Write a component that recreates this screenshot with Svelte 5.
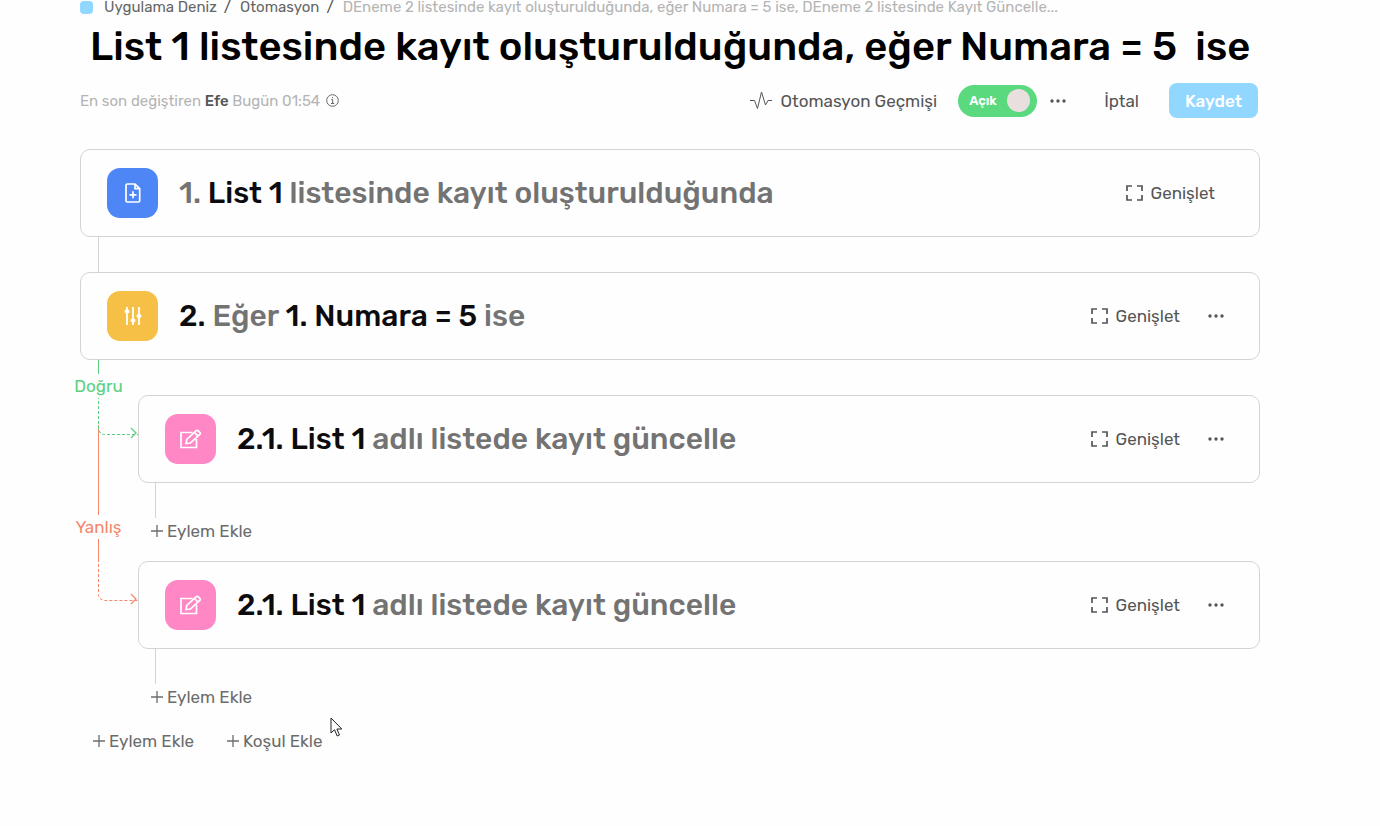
<script>
    let active = $state(true)

    const trigger = {
        icon: 'record',
        text: [['1. ', false], ['List 1', true], [' listesinde kayıt oluşturulduğunda', false]],
    }

    const condition = {
        icon: 'filter',
        text: [['2. ', true], ['Eğer', false], [' 1. Numara = 5', true], [' ise', false]],
        menu: true,
    }

    const update = {
        icon: 'edit',
        text: [['2.1. List 1', true], [' adlı listede kayıt güncelle', false]],
        menu: true,
    }
</script>

{#snippet dots()}
    <svg class="dots" width="16" height="4" viewBox="0 0 16 4" aria-hidden="true">
        <circle cx="2" cy="2" r="1.7" />
        <circle cx="8" cy="2" r="1.7" />
        <circle cx="14" cy="2" r="1.7" />
    </svg>
{/snippet}

{#snippet addButton(label)}
    <button class="add">
        <svg width="12" height="12" viewBox="0 0 12 12" aria-hidden="true">
            <path d="M6 0v12M0 6h12" />
        </svg>
        {label}
    </button>
{/snippet}

{#snippet arrow()}
    <svg class="arrow" width="7" height="12" viewBox="0 0 7 12" aria-hidden="true">
        <path d="M1 1l5 5-5 5" />
    </svg>
{/snippet}

{#snippet card(step)}
    <article class="card">
        <span class="icon {step.icon}">
            {#if step.icon === 'record'}
                <svg width="16" height="20" viewBox="0 0 16 20" aria-hidden="true">
                    <path d="M2.3 1h7.7l4.7 4.7v12a1.3 1.3 0 0 1-1.3 1.3H2.3A1.3 1.3 0 0 1 1 17.7V2.3A1.3 1.3 0 0 1 2.3 1z" />
                    <path d="M10 1v4.7h4.7M8 8.300v7M4.5 11.8h7" />
                </svg>
            {:else if step.icon === 'filter'}
                <svg width="18" height="20" viewBox="0 0 18 20" aria-hidden="true">
                    <path d="M3 1v18M9 1v18M15 1v18" stroke-width="1.8" />
                    <path d="M2.500 5.500h1M8.500 14.500h1M14.500 10h1" stroke-width="4" stroke-linecap="round" />
                </svg>
            {:else}
                <svg width="22" height="20" viewBox="0 0 22 20" aria-hidden="true">
                    <path d="M12.5 3.5H1V18.5h15.5V10" />
                    <path d="M6 14.5l.8-4L16 1.800a1.600 1.600 0 0 1 2.300 0l1.500 1.500a1.600 1.600 0 0 1 0 2.200L10.5 14z" />
                    <path d="M14.5 3.5l3.600 3.600" />
                </svg>
            {/if}
        </span>
        <h2>{#each step.text as [part, strong]}<span class:strong>{part}</span>{/each}</h2>
        <button class="expand">
            <svg width="17" height="16" viewBox="0 0 17 16" aria-hidden="true">
                <path d="M1 6V1h5M11 1h5v5M16 10v5h-5M6 15H1v-5" />
            </svg>
            Genişlet
        </button>
        {#if step.menu}
            <button class="menu" aria-label="Seçenekler">{@render dots()}</button>
        {/if}
    </article>
{/snippet}

<main>
    <nav>
        <span class="app-color"></span>
        <a href="#app">Uygulama Deniz</a>
        <i>/</i>
        <a href="#automations">Otomasyon</a>
        <i>/</i>
        <span class="current">DEneme 2 listesinde kayıt oluşturulduğunda, eğer Numara = 5 ise, DEneme 2 listesinde Kayıt Güncelle...</span>
    </nav>

    <h1>List 1 listesinde kayıt oluşturulduğunda, eğer Numara = 5&nbsp; ise</h1>

    <header>
        <p class="modified">
            <span>En son değiştiren <b>Efe</b> Bugün 01:54</span>
            <svg width="13" height="13" viewBox="0 0 13 13" aria-hidden="true">
                <circle cx="6.5" cy="6.5" r="5.8" />
                <path d="M5.3 5.5h1.4v4M5 9.5h3.2M6.4 3v1.2" />
            </svg>
        </p>
        <button class="history">
            <svg width="22" height="20" viewBox="0 0 22 20" aria-hidden="true">
                <path d="M0 9.5h4.5l3 8L11.5 1l4 13 2.5-4.5h4" />
            </svg>
            Otomasyon Geçmişi
        </button>
        <label class="switch" class:active>
            Açık
            <input type="checkbox" role="switch" bind:checked={active}>
        </label>
        <button class="menu" aria-label="Diğer">{@render dots()}</button>
        <button class="cancel">İptal</button>
        <button class="save">Kaydet</button>
    </header>

    {@render card(trigger)}
    <div class="connector"></div>
    {@render card(condition)}

    <section class="branch first">
        <div class="lane">
            <div class="line true stub"></div>
            <span class="label true">Doğru</span>
            <div class="elbow true">{@render arrow()}</div>
            <div class="line false long"></div>
            <span class="label false">Yanlış</span>
            <div class="line false rest"></div>
        </div>
        <div class="body">
            {@render card(update)}
            <div class="connector"></div>
            {@render addButton('Eylem Ekle')}
        </div>
    </section>

    <section class="branch">
        <div class="lane">
            <div class="elbow false">{@render arrow()}</div>
        </div>
        <div class="body">
            {@render card(update)}
            <div class="connector"></div>
            {@render addButton('Eylem Ekle')}
        </div>
    </section>

    <footer>
        {@render addButton('Eylem Ekle')}
        {@render addButton('Koşul Ekle')}
    </footer>

    <svg class="cursor" width="13" height="21" viewBox="0 0 13 21" aria-hidden="true">
        <path d="M1 1v15l3.5-3.3 2.7 6.3 2.3-1-2.6-6h4.9z" />
    </svg>
</main>

<style>
    :global(body) {
        margin: 0;
        background: #fefefe;
    }

    main {
        position: relative;
        padding: 0 120px 40px 80px;
        font-family: Rubik, Roboto, sans-serif;
        font-size: 17px;
        color: #555;
    }

    button {
        display: flex;
        align-items: center;
        padding: 0;
        border: 0;
        background: none;
        font: inherit;
        color: inherit;
        white-space: nowrap;
        cursor: pointer;
    }

    svg {
        flex: none;
        fill: none;
        stroke: currentColor;
    }

    /* Breadcrumb and title */

    nav {
        display: flex;
        align-items: center;
        height: 14px;
        font-size: 15px;
        line-height: 14px;
        white-space: nowrap;
    }

    nav a {
        color: #666;
        text-decoration: none;
    }

    nav i {
        margin: 0 9px 0 7px;
        font-style: normal;
    }

    .app-color {
        width: 13px;
        height: 13px;
        margin-right: 11px;
        border-radius: 4px;
        background: #91d7ff;
    }

    .current {
        color: #b4b4b4;
    }

    h1 {
        margin: 8px 0 12px 10px;
        font-size: 40px;
        font-weight: 500;
        line-height: 49px;
        color: #000;
        white-space: nowrap;
    }

    header {
        display: flex;
        align-items: center;
        margin: 0 2px 31px 0;
        height: 35px;
    }

    .modified {
        display: flex;
        align-items: center;
        gap: 6px;
        margin: 0 auto 0 0;
        font-size: 15px;
        color: #b4b4b4;
        white-space: nowrap;
    }

    .modified b {
        font-weight: 500;
        color: #555;
    }

    .modified svg {
        color: #666;
    }

    .history {
        gap: 9px;
    }

    .switch {
        display: flex;
        align-items: center;
        justify-content: space-between;
        box-sizing: border-box;
        width: 79px;
        height: 32px;
        margin-left: 21px;
        padding: 0 7px 0 11px;
        border-radius: 16px;
        background: #bbb;
        font-size: 13px;
        font-weight: 600;
        color: #fff;
    }

    .switch.active {
        background: #5bd97f;
    }

    .switch input {
        appearance: none;
        width: 23px;
        height: 23px;
        margin: 0;
        border-radius: 50%;
        background: #e9dfdf;
    }

    .dots {
        fill: currentColor;
        stroke: none;
    }

    header .menu {
        margin-left: 13px;
    }

    .cancel {
        margin: 0 30px 0 38px;
    }

    .save {
        height: 35px;
        padding: 0 16px;
        border-radius: 8px;
        background: #91d7ff;
        font-weight: 500;
        color: #fff;
    }

    /* Steps */

    .card {
        display: flex;
        align-items: center;
        padding: 18px 35px 18px 26px;
        border: 1px solid #d4d4d4;
        border-radius: 10px;
    }

    .icon {
        display: flex;
        flex: none;
        align-items: center;
        justify-content: center;
        width: 51px;
        height: 50px;
        border-radius: 13px;
        color: #fff;
    }

    .icon svg {
        stroke-width: 1.7;
    }

    .icon.record {
        background: #4e87f5;
    }

    .icon.filter {
        background: #f6bf45;
    }

    .icon.edit {
        background: #ff87c5;
    }

    h2 {
        flex: 1;
        margin: 0 0 0 21px;
        font-size: 30px;
        font-weight: 500;
        line-height: 40px;
        color: #737373;
        white-space: pre-wrap;
    }

    .strong {
        color: #0c0c0f;
    }

    .expand {
        gap: 8px;
        margin-right: 9px;
    }

    .expand svg {
        stroke-width: 1.7;
    }

    .card .menu {
        margin-left: 19px;
    }

    .connector {
        width: 1px;
        height: 35px;
        margin-left: 18px;
        background: #d4d4d4;
    }

    /* Branches */

    .branch {
        display: flex;
        padding-bottom: 18px;
    }

    .branch.first {
        padding-bottom: 0;
    }

    .lane {
        display: flex;
        flex-direction: column;
        flex: none;
        width: 58px;
    }

    .body {
        flex: 1;
    }

    .first .body {
        padding: 35px 0 17px;
    }

    .body .connector {
        margin-left: 17px;
    }

    .true {
        color: #5bd080;
    }

    .false {
        color: #f5876b;
    }

    .line {
        width: 1px;
        margin-left: 18px;
        background: currentColor;
    }

    .stub {
        height: 14px;
    }

    .long {
        height: 90px;
        margin-top: -10px;
    }

    .rest {
        flex: 1;
    }

    .label {
        display: flex;
        justify-content: center;
        width: 37px;
        line-height: 24px;
    }

    .elbow {
        position: relative;
        box-sizing: border-box;
        height: 37px;
        margin-left: 18px;
        border: 1px dashed currentColor;
        border-width: 0 0 1px 1px;
        border-radius: 0 0 0 7px;
    }

    .elbow.false {
        height: 40px;
    }

    .arrow {
        position: absolute;
        right: 1px;
        bottom: -5px;
        stroke-width: 1.3;
    }

    .add {
        gap: 4px;
        height: 26px;
        margin-left: 13px;
        color: #6c6c6c;
    }

    .add svg {
        stroke-width: 1.3;
    }

    footer {
        display: flex;
        gap: 20px;
    }

    .cursor {
        position: absolute;
        top: 717px;
        left: 330px;
        fill: #fff;
        stroke: #222;
    }
</style>
